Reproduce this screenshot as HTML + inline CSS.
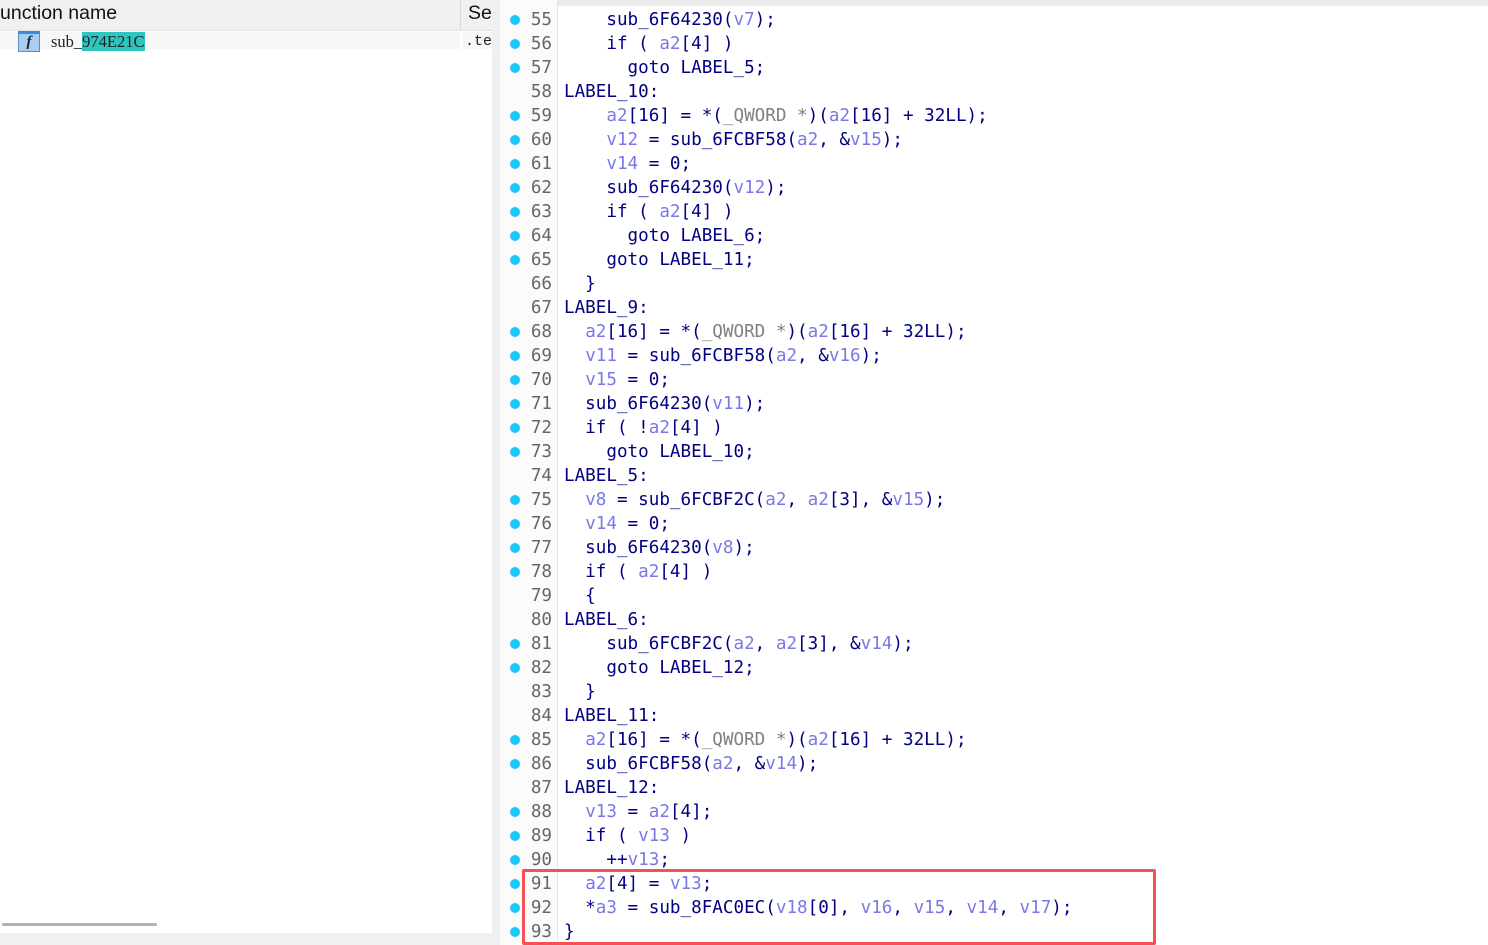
<!DOCTYPE html>
<html><head><meta charset="utf-8"><style>
body{margin:0;width:1488px;height:945px;overflow:hidden;background:#fff;position:relative;font-family:"Liberation Sans",sans-serif}
#left{position:absolute;left:0;top:0;width:492px;height:933px;background:#fff;border-right:1px solid #e0e0e0}
#hdr{position:absolute;left:0;top:0;width:492px;height:30px;background:#f0f0f0;border-bottom:1px solid #e2e2e2}
#strip{position:absolute;left:492px;top:0;width:8px;height:945px;background:#f0f0f0}
#bot{position:absolute;left:0;top:933px;width:492px;height:12px;background:#f0f0f0}
#gut{position:absolute;left:500px;top:0;width:57px;height:945px;background:#fbfbfb;border-right:1px solid #e4e4e4}
.num{position:absolute;left:520px;width:32px;text-align:right;color:#666;font-family:"DejaVu Sans Mono",monospace;font-size:17.6px;line-height:24px;height:24px}
.dot{position:absolute;left:510px;width:10px;height:10px;border-radius:50%;background:#18c8f5}
.c{position:absolute;left:564px;font-family:"DejaVu Sans Mono",monospace;font-size:17.6px;line-height:24px;white-space:pre;color:#000080}
.v{color:#7878e8}.g{color:#808080}
</style></head><body>
<div id="left">
<div id="hdr"><span style="position:absolute;left:0;top:2px;font-size:19.5px;color:#111">unction name</span>
<div style="position:absolute;left:460px;top:0;width:1px;height:30px;background:#d8d8d8"></div>
<span style="position:absolute;left:468px;top:2px;font-size:19.5px;color:#111">Seg</span></div>
<div style="position:absolute;left:0;top:32px;width:460px;height:17px;background:#f7f7f7"></div>
<div style="position:absolute;left:462px;top:32px;width:30px;height:17px;background:#f7f7f7"></div>
<div style="position:absolute;left:18px;top:31px;width:22px;height:21px;background:#a8cdf0;border:1px solid #5a8ec8;box-sizing:border-box;border-top:3px solid #3a8ad8;font:italic bold 15px 'Liberation Serif',serif;text-align:center;line-height:17px;color:#123">f</div>
<span style="position:absolute;left:51px;top:32px;font:16.5px 'Liberation Serif',serif;color:#222;line-height:19px">sub_<span style="background:#2ec4c0">974E21C</span></span>
<span style="position:absolute;left:465px;top:33px;font:15px 'Liberation Mono',monospace;color:#222;line-height:18px">.te</span>
<div style="position:absolute;left:2px;top:923px;width:155px;height:3px;background:#b3b3b3;border-radius:2px"></div>
</div>
<div id="strip"></div><div id="bot"></div>
<div id="gut"></div>
<div style="position:absolute;left:558px;top:0;width:930px;height:6px;background:#ebebeb"></div>

<div class="c" style="top:8px">    sub_6F64230(<span class="v">v7</span>);
    if ( <span class="v">a2</span>[4] )
      goto LABEL_5;
LABEL_10:
    <span class="v">a2</span>[16] = *(<span class="g">_QWORD *</span>)(<span class="v">a2</span>[16] + 32LL);
    <span class="v">v12</span> = sub_6FCBF58(<span class="v">a2</span>, &amp;<span class="v">v15</span>);
    <span class="v">v14</span> = 0;
    sub_6F64230(<span class="v">v12</span>);
    if ( <span class="v">a2</span>[4] )
      goto LABEL_6;
    goto LABEL_11;
  }
LABEL_9:
  <span class="v">a2</span>[16] = *(<span class="g">_QWORD *</span>)(<span class="v">a2</span>[16] + 32LL);
  <span class="v">v11</span> = sub_6FCBF58(<span class="v">a2</span>, &amp;<span class="v">v16</span>);
  <span class="v">v15</span> = 0;
  sub_6F64230(<span class="v">v11</span>);
  if ( !<span class="v">a2</span>[4] )
    goto LABEL_10;
LABEL_5:
  <span class="v">v8</span> = sub_6FCBF2C(<span class="v">a2</span>, <span class="v">a2</span>[3], &amp;<span class="v">v15</span>);
  <span class="v">v14</span> = 0;
  sub_6F64230(<span class="v">v8</span>);
  if ( <span class="v">a2</span>[4] )
  {
LABEL_6:
    sub_6FCBF2C(<span class="v">a2</span>, <span class="v">a2</span>[3], &amp;<span class="v">v14</span>);
    goto LABEL_12;
  }
LABEL_11:
  <span class="v">a2</span>[16] = *(<span class="g">_QWORD *</span>)(<span class="v">a2</span>[16] + 32LL);
  sub_6FCBF58(<span class="v">a2</span>, &amp;<span class="v">v14</span>);
LABEL_12:
  <span class="v">v13</span> = <span class="v">a2</span>[4];
  if ( <span class="v">v13</span> )
    ++<span class="v">v13</span>;
  <span class="v">a2</span>[4] = <span class="v">v13</span>;
  *<span class="v">a3</span> = sub_8FAC0EC(<span class="v">v18</span>[0], <span class="v">v16</span>, <span class="v">v15</span>, <span class="v">v14</span>, <span class="v">v17</span>);
}</div>

<div style="position:absolute;top:1px;left:0">
<div class="num" style="top:7px">55</div><div class="num" style="top:31px">56</div><div class="num" style="top:55px">57</div><div class="num" style="top:79px">58</div><div class="num" style="top:103px">59</div><div class="num" style="top:127px">60</div><div class="num" style="top:151px">61</div><div class="num" style="top:175px">62</div><div class="num" style="top:199px">63</div><div class="num" style="top:223px">64</div><div class="num" style="top:247px">65</div><div class="num" style="top:271px">66</div><div class="num" style="top:295px">67</div><div class="num" style="top:319px">68</div><div class="num" style="top:343px">69</div><div class="num" style="top:367px">70</div><div class="num" style="top:391px">71</div><div class="num" style="top:415px">72</div><div class="num" style="top:439px">73</div><div class="num" style="top:463px">74</div><div class="num" style="top:487px">75</div><div class="num" style="top:511px">76</div><div class="num" style="top:535px">77</div><div class="num" style="top:559px">78</div><div class="num" style="top:583px">79</div><div class="num" style="top:607px">80</div><div class="num" style="top:631px">81</div><div class="num" style="top:655px">82</div><div class="num" style="top:679px">83</div><div class="num" style="top:703px">84</div><div class="num" style="top:727px">85</div><div class="num" style="top:751px">86</div><div class="num" style="top:775px">87</div><div class="num" style="top:799px">88</div><div class="num" style="top:823px">89</div><div class="num" style="top:847px">90</div><div class="num" style="top:871px">91</div><div class="num" style="top:895px">92</div><div class="num" style="top:919px">93</div>

<div class="dot" style="top:14px"></div><div class="dot" style="top:38px"></div><div class="dot" style="top:62px"></div><div class="dot" style="top:110px"></div><div class="dot" style="top:134px"></div><div class="dot" style="top:158px"></div><div class="dot" style="top:182px"></div><div class="dot" style="top:206px"></div><div class="dot" style="top:230px"></div><div class="dot" style="top:254px"></div><div class="dot" style="top:326px"></div><div class="dot" style="top:350px"></div><div class="dot" style="top:374px"></div><div class="dot" style="top:398px"></div><div class="dot" style="top:422px"></div><div class="dot" style="top:446px"></div><div class="dot" style="top:494px"></div><div class="dot" style="top:518px"></div><div class="dot" style="top:542px"></div><div class="dot" style="top:566px"></div><div class="dot" style="top:638px"></div><div class="dot" style="top:662px"></div><div class="dot" style="top:734px"></div><div class="dot" style="top:758px"></div><div class="dot" style="top:806px"></div><div class="dot" style="top:830px"></div><div class="dot" style="top:854px"></div><div class="dot" style="top:878px"></div><div class="dot" style="top:902px"></div><div class="dot" style="top:926px"></div>
</div>

<div style="position:absolute;left:522px;top:869px;width:634px;height:76px;border:3px solid #f25252;box-sizing:border-box;border-radius:2px"></div>
</body></html>
